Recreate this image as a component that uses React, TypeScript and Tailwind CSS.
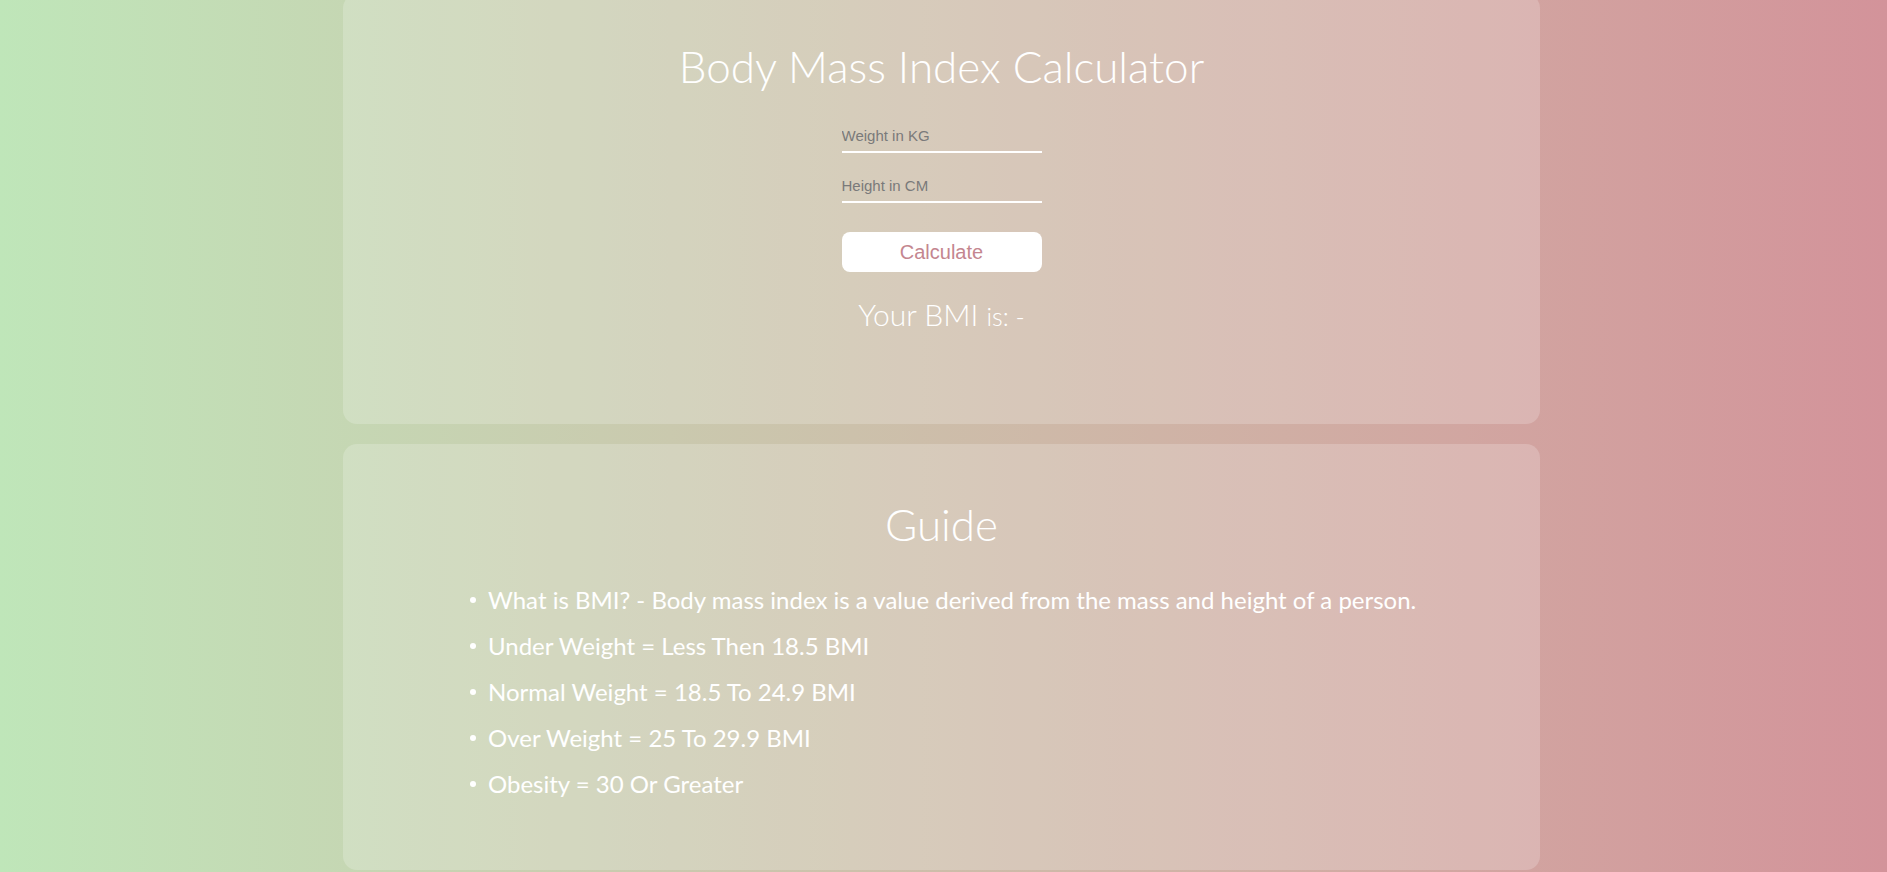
import React from "react";

const items = [
  "What is BMI? - Body mass index is a value derived from the mass and height of a person.",
  "Under Weight = Less Then 18.5 BMI",
  "Normal Weight = 18.5 To 24.9 BMI",
  "Over Weight = 25 To 29.9 BMI",
  "Obesity = 30 Or Greater",
];

export default function App() {
  return (
    <div
      className="w-full h-[872px] overflow-hidden pr-[4px] bg-gradient-to-r from-[#bfe6b9] to-[#d3939a] flex flex-col items-center"
      style={{ fontFamily: "Lato, 'Open Sans', sans-serif" }}
    >
      <div className="w-[1197px] -mt-[6px] h-[430px] shrink-0 rounded-[14px] bg-white/20 flex flex-col items-center">
        <h1 className="mt-[44px] text-[44px] leading-[56px] text-white font-light">
          Body Mass Index Calculator
        </h1>
        <div className="mt-[29px] flex flex-col items-center">
          <input
            placeholder="Weight in KG"
            className="w-[200px] h-[30px] bg-transparent border-b-2 border-white outline-none text-[15px] text-[#555] placeholder:text-[#7a7a7a] pb-[4px]"
            style={{ fontFamily: "'Liberation Sans', Arial, sans-serif" }}
          />
          <input
            placeholder="Height in CM"
            className="mt-[20px] w-[200px] h-[30px] bg-transparent border-b-2 border-white outline-none text-[15px] text-[#555] placeholder:text-[#7a7a7a] pb-[4px]"
            style={{ fontFamily: "'Liberation Sans', Arial, sans-serif" }}
          />
          <button
            className="mt-[29px] w-[200px] h-[40px] rounded-[8px] bg-white text-[20px] text-[#c4868f]"
            style={{ fontFamily: "'Liberation Sans', Arial, sans-serif" }}
          >
            Calculate
          </button>
        </div>
        <h2 className="mt-[23px] text-[30px] leading-[38px] text-white font-light">
          Your BMI <span className="text-[25px]">is: -</span>
        </h2>
      </div>

      <div className="mt-[20px] w-[1197px] h-[426px] shrink-0 rounded-[14px] bg-white/20 flex flex-col items-center">
        <h2 className="mt-[52px] text-[44px] leading-[56px] text-white font-light">Guide</h2>
        <ul className="self-start ml-[127px] mt-[32px] flex flex-col gap-[14px]">
          {items.map((t) => (
            <li key={t} className="flex items-center text-[24px] leading-[32px] text-white">
              <span className="w-[6px] h-[6px] rounded-full bg-white mr-[12px]" />
              {t}
            </li>
          ))}
        </ul>
      </div>
    </div>
  );
}
